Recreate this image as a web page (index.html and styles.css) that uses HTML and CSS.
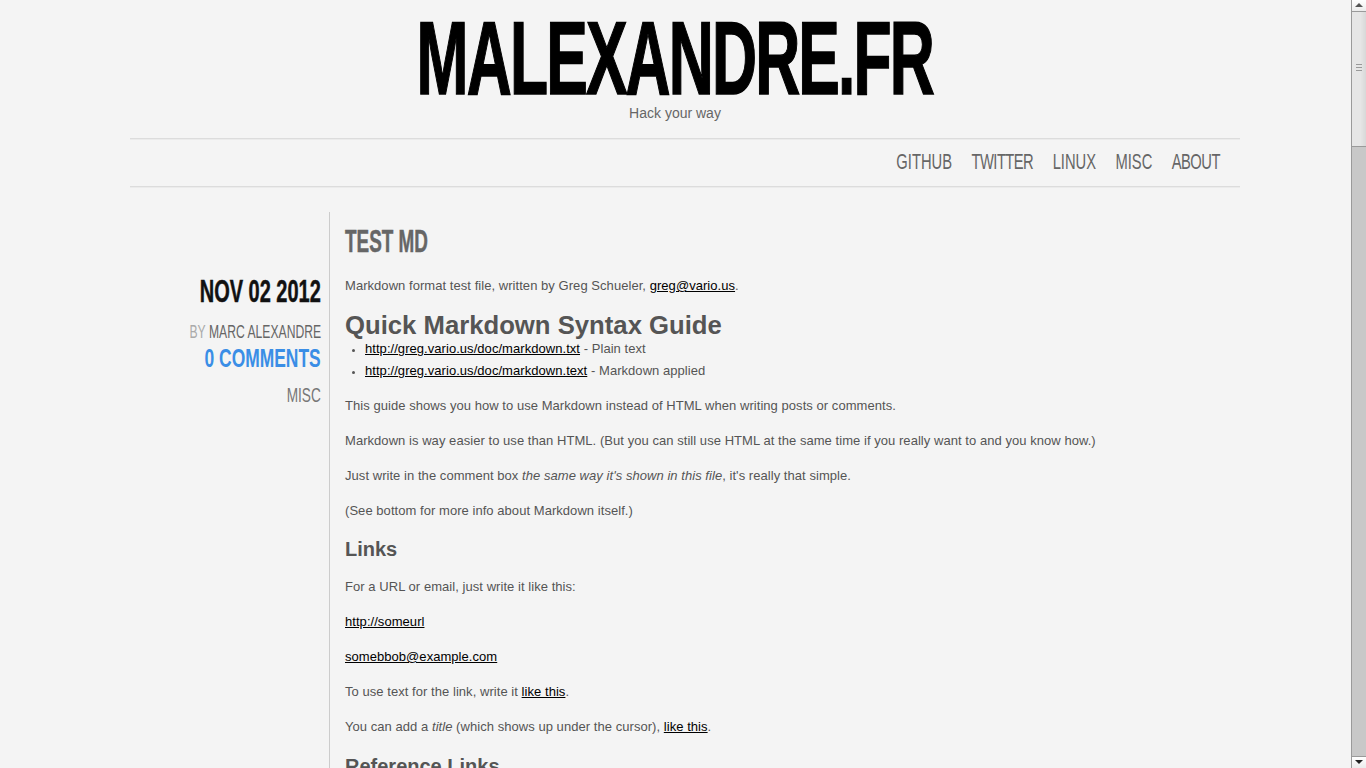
FILE: index.html
```html
<!DOCTYPE html>
<html lang="fr">
<head>
<meta charset="utf-8">
<title>malexandre.fr - Test MD</title>
<link rel="stylesheet" href="styles.css">
</head>
<body>
<div class="page">
  <header class="site-header">
    <h1 class="site-title"><a href="#"><span class="squeeze title-squeeze">MALEXANDRE.FR</span></a></h1>
    <p class="tagline">Hack your way</p>
  </header>

  <div class="container">
    <div class="rule"></div>
    <nav class="menu">
      <ul class="menu-list">
        <li><a href="#">GITHUB</a></li>
        <li><a href="#" class="tight">TWITTER</a></li>
        <li><a href="#">LINUX</a></li>
        <li><a href="#">MISC</a></li>
        <li><a href="#" class="tight">ABOUT</a></li>
      </ul>
    </nav>
    <div class="rule"></div>

    <main class="post">
      <aside class="post-meta">
        <div class="meta-line meta-date"><span class="squeeze">NOV 02 2012</span></div>
        <div class="meta-line meta-author"><span class="squeeze"><span class="by">BY</span>&nbsp;MARC ALEXANDRE</span></div>
        <div class="meta-line meta-comments"><a href="#"><span class="squeeze">0 COMMENTS</span></a></div>
        <div class="meta-line meta-category"><span class="squeeze">MISC</span></div>
      </aside>

      <article class="post-body">
        <h2 class="post-title"><span class="squeeze">TEST MD</span></h2>

        <p>Markdown format test file, written by Greg Schueler, <a href="#">greg@vario.us</a>.</p>

        <h1>Quick Markdown Syntax Guide</h1>
        <ul>
          <li><a href="#">http://greg.vario.us/doc/markdown.txt</a> - Plain text</li>
          <li><a href="#">http://greg.vario.us/doc/markdown.text</a> - Markdown applied</li>
        </ul>

        <p>This guide shows you how to use Markdown instead of HTML when writing posts or comments.</p>
        <p>Markdown is way easier to use than HTML. (But you can still use HTML at the same time if you really want to and you know how.)</p>
        <p>Just write in the comment box <em>the same way it's shown in this file</em>, it's really that simple.</p>
        <p>(See bottom for more info about Markdown itself.)</p>

        <h2>Links</h2>
        <p>For a URL or email, just write it like this:</p>
        <p><a href="#">http://someurl</a></p>
        <p><a href="#">somebbob@example.com</a></p>
        <p>To use text for the link, write it <a href="#">like this</a>.</p>
        <p>You can add a <em>title</em> (which shows up under the cursor), <a href="#">like this</a>.</p>

        <h2 class="ref-heading">Reference Links</h2>
        <p>You can also put the links at the bottom of the post with reference names.</p>
      </article>
    </main>
  </div>
</div>

<div class="scrollbar" aria-hidden="true">
  <div class="sb-btn sb-up"></div>
  <div class="sb-thumb"><span class="sb-grip"></span></div>
  <div class="sb-track"></div>
  <div class="sb-btn sb-down"></div>
</div>
</body>
</html>
```

FILE: styles.css
```css
html::-webkit-scrollbar { width: 0; height: 0; }
html { scrollbar-width: none; }

body {
  margin: 0;
  background: #f4f4f4;
  font-family: "Liberation Sans", Arial, sans-serif;
  font-size: 13px;
  line-height: 20px;
  color: #555;
}

.page {
  width: 1350px;
}

/* condensed display text (Oswald-like) */
.squeeze {
  display: inline-block;
  white-space: nowrap;
  transform-origin: right center;
}

/* header */
.site-header {
  padding-top: 14px;
  text-align: center;
}
.site-title {
  margin: 0;
  font-size: 103px;
  line-height: 90px;
  font-weight: 700;
}
.site-title a {
  color: #000;
  text-decoration: none;
}
.title-squeeze {
  letter-spacing: -3px;
  transform: scaleX(0.605);
  transform-origin: center center;
  -webkit-text-stroke: 1.5px #000;
}
.tagline {
  margin: 0;
  font-size: 14px;
  line-height: 18px;
  color: #666;
}

.container {
  width: 1130px;
  margin: 0 auto;
  padding-left: 20px;
  box-sizing: border-box;
}

.rule {
  border-top: 1px solid #dcdcdc;
  border-bottom: 1px solid #ebebeb;
}
.rule:first-child {
  margin-top: 16px;
}

/* nav */
.menu {
  display: flex;
  justify-content: flex-end;
  padding-right: 20px;
  padding-bottom: 2px;
}
.menu-list {
  display: flex;
  gap: 29px;
  margin: 0;
  padding: 0;
  list-style: none;
  font-size: 22px;
  line-height: 44px;
  transform: scaleX(0.67);
  transform-origin: right center;
}
.menu-list a {
  color: #666;
  text-decoration: none;
}
.menu-list a.tight {
  letter-spacing: -0.8px;
}

/* post layout */
.post {
  display: flex;
  margin-top: 24px;
}
.post-meta {
  width: 200px;
  flex: none;
  box-sizing: border-box;
  padding-right: 8px;
  border-right: 1px solid #cccccc;
}
.meta-line {
  display: flex;
  justify-content: flex-end;
}
.meta-date {
  margin-top: 62px;
  font-size: 31px;
  line-height: 36px;
  font-weight: 700;
  color: #111;
}
.meta-date .squeeze {
  transform: scaleX(0.645);
  -webkit-text-stroke: 0.5px #111;
}
.meta-author {
  margin-top: 11px;
  font-size: 18px;
  line-height: 22px;
  color: #666;
}
.meta-author .squeeze { transform: scaleX(0.675); }
.meta-author .by { color: #aaa; }
.meta-comments {
  font-size: 26.5px;
  line-height: 30px;
  font-weight: 700;
}
.meta-comments a {
  color: #3a8ee6;
  text-decoration: none;
}
.meta-comments .squeeze { transform: scaleX(0.657); }
.meta-category {
  margin-top: 10px;
  font-size: 19.5px;
  line-height: 24px;
  color: #777;
}
.meta-category .squeeze { transform: scaleX(0.70); }

.post-body {
  flex: 1;
  padding-left: 15px;
  letter-spacing: 0.05px;
}
.post-title {
  margin: 12px 0 16px;
  font-size: 31px;
  line-height: 36px;
  font-weight: 700;
  color: #666;
  letter-spacing: 0;
}
.post-title .squeeze {
  transform: scaleX(0.61);
  transform-origin: left center;
  -webkit-text-stroke: 0.5px #666;
}

.post-body p {
  margin: 0 0 15px;
}
.post-body a {
  color: #000;
  text-decoration: underline;
}
.post-body h1 {
  margin: 16px 0 0;
  font-size: 25.7px;
  line-height: 26px;
  font-weight: 700;
  color: #555;
  letter-spacing: 0;
}
.post-body h2:not(.post-title) {
  margin: 16px 0 16px;
  font-size: 20px;
  line-height: 24px;
  font-weight: 700;
  color: #555;
  letter-spacing: 0;
}
.post-body h2.ref-heading {
  margin-top: 17px;
}
.post-body ul {
  margin: 0 0 14px;
  padding-left: 20px;
}
.post-body li {
  line-height: 22px;
}
.post-body li::marker {
  font-size: 11px;
}

/* scrollbar drawn over the right edge */
.scrollbar {
  position: fixed;
  top: 0;
  right: 0;
  width: 15px;
  height: 100vh;
  display: flex;
  flex-direction: column;
  background: #c8c8c8;
  border-left: 1px solid #9a9a9a;
  box-sizing: border-box;
}
.sb-btn {
  height: 11px;
  flex: none;
  background: linear-gradient(#ffffff, #ececec);
  border-bottom: 1px solid #9a9a9a;
  position: relative;
}
.sb-down {
  border-bottom: 0;
  border-top: 1px solid #9a9a9a;
}
.sb-btn::after {
  content: "";
  position: absolute;
  left: 3px;
  border-left: 4px solid transparent;
  border-right: 4px solid transparent;
}
.sb-up::after {
  top: 3px;
  border-bottom: 4px solid #555;
}
.sb-down::after {
  top: 3px;
  border-top: 4px solid #222;
}
.sb-thumb {
  height: 134px;
  flex: none;
  background: linear-gradient(90deg, #e6e6e6 0%, #e6e6e6 60%, #d8d8d8 100%);
  border-bottom: 1px solid #9a9a9a;
  display: flex;
  align-items: flex-start;
  justify-content: center;
}
.sb-grip {
  margin-top: 52px;
  width: 6px;
  height: 5px;
  border-top: 1px solid #999;
  border-bottom: 1px solid #999;
  background: linear-gradient(#fff0 2px, #999 2px, #999 3px, #fff0 3px);
}
.sb-track {
  flex: 1;
}
```
